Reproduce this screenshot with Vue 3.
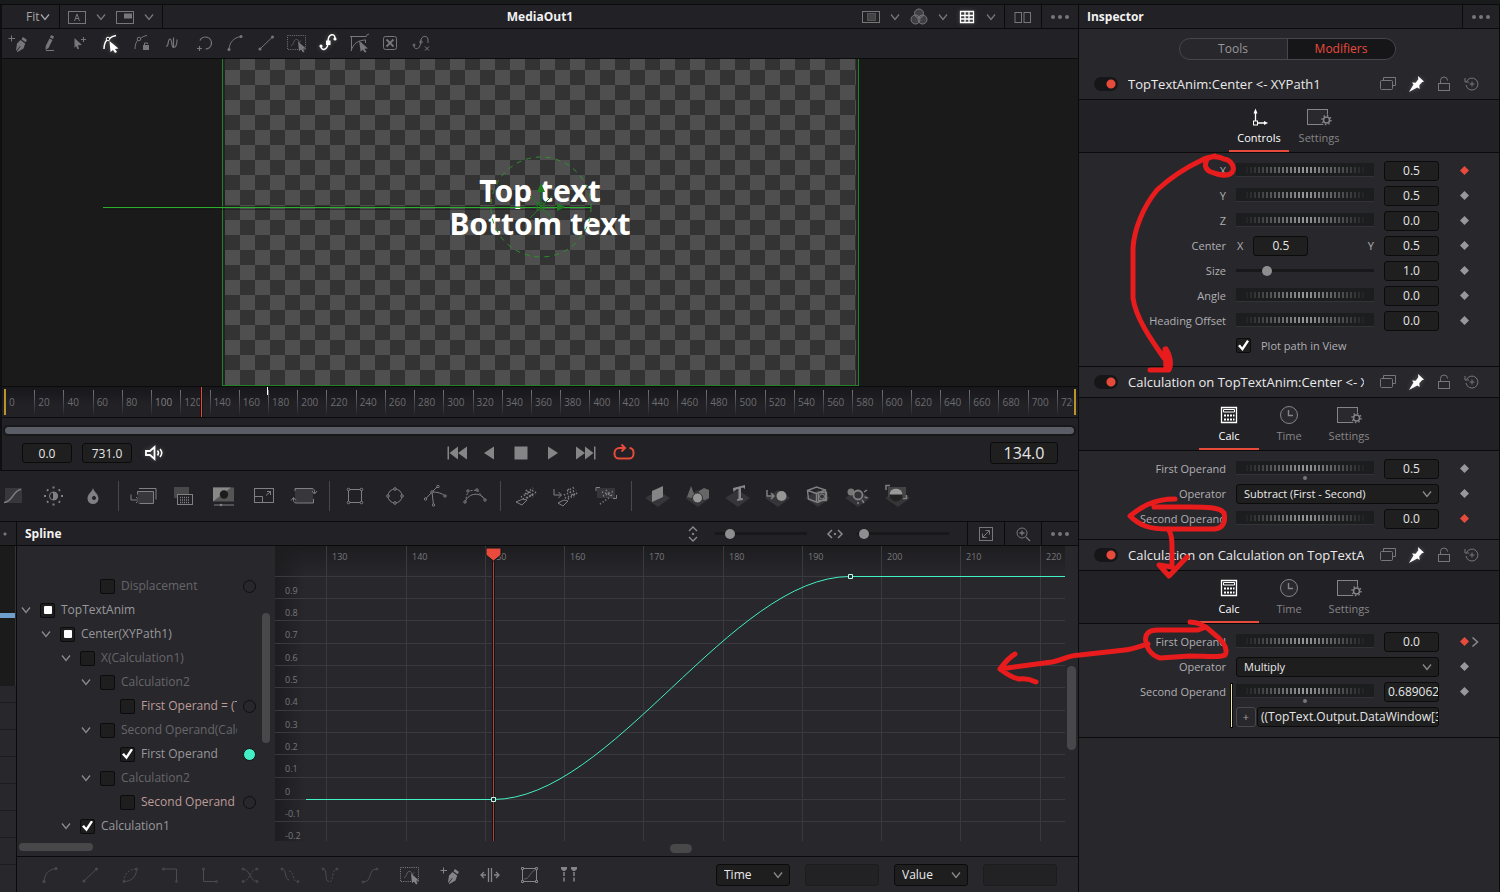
<script setup>
import { h } from 'vue'

const icons = {
  chev: '<path d="M8 9.500l4 5 4-5" stroke-width="1.300"/>',
  chevR: '<path d="M9.500 7.500l5 4.500-5 4.500" stroke-width="1.500"/>',
  boxA: '<rect x="3.500" y="6.500" width="17" height="12"/><path d="M9.500 16l2.500-7 2.500 7M10.500 13.500h3"/>',
  pip: '<rect x="3.500" y="6.500" width="17" height="12"/><rect x="11" y="8.500" width="8" height="5" fill="currentColor" stroke="none"/>',
  roi: '<rect x="3.500" y="6.500" width="17" height="11"/><rect x="8.500" y="8.500" width="8" height="7" stroke-dasharray="1 1" fill="#444"/>',
  rgb: '<g fill="currentColor" fill-opacity=".35"><circle cx="12" cy="8.500" r="4.500"/><circle cx="8.500" cy="14.500" r="4.500"/><circle cx="15.500" cy="14.500" r="4.500"/></g>',
  grid: '<path d="M5.500 6.500h13v11h-13zM5.500 10.500h13M5.500 14h13M10 6.500v11M14 6.500v11" stroke-width="1.300"/>',
  split: '<rect x="4" y="7.500" width="6.500" height="10"/><rect x="13" y="7.500" width="6.500" height="10"/>',
  dots: '<g fill="currentColor" stroke="none"><circle cx="5" cy="12" r="2"/><circle cx="12" cy="12" r="2"/><circle cx="19" cy="12" r="2"/></g>',
  pen: '<path d="M2.500 7.500h6.500M5.500 4.500v6"/><path d="M17 6l4 3-1.500 2.300-4-3zM14.500 9l4.700 3.500-1.700 5-6 3.500-.700-.500 3.700-5-.500-.500-3.700 4.700-.300-.500 1-6.700z" fill="currentColor" stroke="none"/>',
  pencil: '<path d="M14 4l3 1.500-1 2.500-3-1.500zM12.500 7.500l3 1.500-4 8-3 2 .200-4z" fill="currentColor" stroke="none"/><path d="M9 19.500h8"/>',
  addpt: '<path d="M6.500 7l7.500 7-4 .300 1 3.500-1.500.500-1.500-3.300-1.500 2z" fill="currentColor" stroke="none"/><path d="M13 8.500h5M15.500 6v5"/>',
  modify: '<path d="M5 18C5 14 6 11 8 9M10.500 7.500C12 6 14 5 17 4.500" stroke-width="1.500"/><circle cx="9" cy="8" r="1.800"/><path d="M10.500 10l9 7.500-3.500.500 2 3-2 1-2-3-2.500 2z" fill="currentColor" stroke="none"/>',
  modlock: '<path d="M5 18C5 14 6 11 8 9M10.500 7.500C12 6 14 5 17 4.500"/><circle cx="9" cy="8" r="1.800"/><rect x="13" y="14" width="6" height="5" fill="currentColor" stroke="none"/><path d="M14.500 14v-2h3v1"/>',
  wave: '<path d="M5 15c3 1 1.500-7 4-7s1 8.500 3.500 8.500 3.500-3 3.500-8M12.500 6.500v10" stroke-width="1.200"/>',
  loop: '<path d="M8 9.500a6 6 0 1 1 5.500 8.500M5 17.500h5M7.500 15v5" stroke-width="1.200"/>',
  arc: '<path d="M6 18.500C6.500 11 11 6.500 18 5.500"/><g fill="currentColor" stroke="none"><circle cx="6" cy="18.500" r="1.500"/><circle cx="18" cy="5.500" r="1.500"/></g>',
  line: '<path d="M6 18L18.500 6"/><g fill="currentColor" stroke="none"><circle cx="6" cy="18" r="1.500"/><circle cx="18.500" cy="6" r="1.500"/></g>',
  marq: '<rect x="2.500" y="4.500" width="18" height="14" stroke-dasharray="1 1.200"/><path d="M6 14.500c3 0 2-6 5.500-6s1 6 4.500 1" opacity=".6"/><path d="M13 10.500l8 7-3 .300 1.500 3-1.500.700-2-3-2 1.800z" fill="currentColor" stroke="none"/>',
  spline: '<path d="M5 15.500c0 4.500 7 4.500 7-4.500s7-9 7-4" stroke-width="1.500"/><g fill="currentColor" stroke="none"><rect x="10" y="9.500" width="4.500" height="4.500"/><circle cx="5" cy="15" r="1.600"/><circle cx="19" cy="8" r="1.600"/></g>',
  poly: '<path d="M4.500 19.500v-14h15M4 20c2-7 7-11 15-11M3 5.500h2M19 4.500l3-1.500M18.500 9v3"/><path d="M12 9.500l9 8-3.500.300 2 3-1.500 1-2.300-3-2 2z" fill="currentColor" stroke="none"/>',
  closebox: '<rect x="5.500" y="5.500" width="13" height="13" rx="2"/><path d="M8.500 8.500l7 7M15.500 8.500l-7 7" stroke-width="1.800"/>',
  splinex: '<path d="M5 15c0 4 6.500 4 6.500-3.500S18.500 4 19 8v4"/><circle cx="5" cy="14" r="1"/><circle cx="12" cy="11" r="1.200"/><path d="M16 15.500l4 4M20 15.500l-4 4"/>',
  first: '<path d="M2.500 5.500h1.500v13H2.500zM13 5.500v13L4.500 12zM22 5.500v13L13 12z" fill="currentColor" stroke="none"/>',
  back: '<path d="M17 5.500v13L7 12z" fill="currentColor" stroke="none"/>',
  stop: '<path d="M5.500 5.500h13v13h-13z" fill="currentColor" stroke="none"/>',
  play: '<path d="M7 5.500v13L17 12z" fill="currentColor" stroke="none"/>',
  last: '<path d="M20 5.500h1.500v13H20zM11 5.500v13l8.500-6.500zM2 5.500v13L11 12z" fill="currentColor" stroke="none"/>',
  repeat: '<path d="M12.500 7H7.500a5 5 0 0 0-5 5v1a4.500 4.500 0 0 0 4.500 4.500h10a4.500 4.500 0 0 0 4.500-4.500v-1.500a4.500 4.500 0 0 0-4-4.500M9.500 3.500L13 7l-3.500 3.500" stroke-width="2"/>',
  sound: '<path d="M12.500 6v12l-4.500-4H4v-4h4z" stroke-width="1.800"/><path d="M15.500 9.500q2 2.500 0 5M18 8q3.500 4 0 8" stroke-width="1.500"/>',
  curve: '<rect x="4" y="4" width="17" height="15" fill="#38383c" stroke="none"/><path d="M3 18.500C12 18.500 12 5.500 20 5.500" stroke-width="1.500"/>',
  bright: '<circle cx="12.500" cy="12" r="4"/><path d="M12.500 8a4 4 0 0 1 0 8z" fill="currentColor"/><path d="M12.500 2.500v2M12.500 19.500v2M3 12h2M20 12h2M6 5.500l1.300 1.300M17.700 17.200l1.300 1.300M6 18.500l1.300-1.300M17.700 6.800L19 5.500" stroke-width="2"/>',
  drop: '<path d="M12 4c1 4 5.500 6 5.500 10.500a5.500 5.500 0 0 1-11 0C6.500 10 11 8 12 4zM13 12a2 2 0 1 0 .01 0z" fill="currentColor" stroke="none" fill-rule="evenodd"/>',
  loader: '<path d="M7 4.500h17v11M-1 10.500v5.500h8M4 13l3 3-3 3"/><rect x="5.500" y="7.500" width="16" height="12" fill="#38383c" stroke="none"/><path d="M5.500 10.500v-3h16v12h-14"/>',
  merge: '<rect x="2" y="3" width="15" height="11" fill="#48484b" stroke="none"/><rect x="5.500" y="10.500" width="15" height="10" fill="#222125"/><path d="M8 13.500h10M8 16h10M8 18.500h10" stroke-dasharray="1 1" stroke-width="1.500"/>',
  matte: '<rect x="1" y="3.500" width="21" height="14" fill="#555" stroke="none"/><path d="M1 17.500v-14h18z" fill="#888" stroke="none"/><circle cx="12" cy="10.500" r="4.200" fill="#1c1c1f" stroke="none"/><path d="M2 21h20"/><circle cx="9" cy="21" r="1.300" fill="currentColor" stroke="none"/>',
  resize: '<rect x="2.500" y="4.500" width="19" height="14"/><path d="M2.500 12.500h8v6M14 11.500l4.500-4M15 7.500h3.500V11"/>',
  rotate: '<rect x="3" y="5" width="18" height="14" fill="#38383c" stroke="none"/><path d="M3 7v-2.500h17q3 0 2.500 5M20 7l2.500 3L25 7M21.500 15v4H4q-3 0-2.500-5M-1 16.500l2.500-3 2.500 3"/>',
  rect: '<path d="M5.500 5.500h13v13h-13z"/><g fill="#222125"><circle cx="5.500" cy="5.500" r="1.300"/><circle cx="18.500" cy="5.500" r="1.300"/><circle cx="5.500" cy="18.500" r="1.300"/><circle cx="18.500" cy="18.500" r="1.300"/></g>',
  ell: '<circle cx="12" cy="12" r="7"/><g fill="#222125"><circle cx="12" cy="5" r="1.300"/><circle cx="19" cy="12" r="1.300"/><circle cx="5" cy="12" r="1.300"/><circle cx="12" cy="19" r="1.300"/></g>',
  bez: '<path d="M2.500 15L9 8l6-6M9 8l1.500 13M9 8c5 0 10 1 13 4"/><g fill="#222125"><circle cx="2.500" cy="15" r="1.200"/><circle cx="9" cy="8" r="1.200"/><circle cx="15" cy="2.500" r="1.200"/><circle cx="22" cy="12" r="1.200"/><circle cx="10.500" cy="21" r="1.200"/></g>',
  bsp: '<path d="M2 18C6 8 18 8 22 16"/><path d="M2 18L5 7l9-1 8 10" stroke-dasharray="2 1.500"/><g fill="#222125"><circle cx="2" cy="18" r="1.200"/><circle cx="5" cy="7" r="1.200"/><circle cx="14" cy="6" r="1.200"/><circle cx="22" cy="16" r="1.200"/></g>',
  emit: '<path d="M2 18l7-3 4 1-5 5z"/><path d="M7 13l13-7M9 15l12-5M11 10l8-6M13 14l9-6M12 6l7 7" stroke-dasharray="1.200 2" stroke-width="1.800"/>',
  pimport: '<path d="M0 5v6h7M4.500 8l3 3-3 3M4 19l6-3 4 1-5 5z"/><path d="M10 11l12-5M11 14l12-5M13 7l8-4M14 15l9-6M14 5l6 8" stroke-dasharray="1.200 2" stroke-width="1.800"/>',
  pend: '<rect x="3" y="4" width="18" height="10" fill="#36363a" stroke="none"/><path d="M2 7V3.500h4M19 14.500h3.500V11"/><path d="M6 20l10-7M8 8l12 4M9 12l11-5M12 6l6 8" stroke-dasharray="1.200 2" stroke-width="1.600"/>',
  plane: '<path d="M0 14l13-8 12 8-12 9z" fill="#36363a" stroke="none"/><path d="M7 7l11-5v11L7 18z" fill="#858585" stroke="none"/>',
  shape: '<path d="M0 14l13-8 12 8-12 9z" fill="#36363a" stroke="none"/><path d="M6 2l4 10-3 2-5-1zM14 7l5-3 5 2v8l-4 2-6-2z" fill="#666" stroke="none"/><circle cx="12.500" cy="14" r="5" fill="#969696" stroke="#333"/>',
  text3: '<path d="M0 14l13-8 12 8-12 9z" fill="#36363a" stroke="none"/><path d="M8 4l12-3v4l-2-1.500-2 .500v10l2 .500v1.500l-6 1v-1.500l1.500-1V5l-2 .500L8.500 8z" fill="#888" stroke="none"/>',
  import3: '<path d="M0 14l13-8 12 8-12 9z" fill="#36363a" stroke="none"/><path d="M2 6v6h7M6 9l3 3-3 3" stroke-width="1.500"/><circle cx="16.500" cy="12" r="5" fill="#969696" stroke="none"/>',
  camera: '<path d="M0 14l13-8 12 8-12 9z" fill="#36363a" stroke="none"/><path d="M2.500 6.500l9-3.500 9 3v9l-8 3.500-9-3.500zM2.500 6.500l9 3M11.500 9.500v9M11.500 9.500l9-3.500M13.500 8.500h8v8h-8z" stroke-width="1.400"/><circle cx="17" cy="12.500" r="2.500"/>',
  light: '<path d="M0 14l13-8 12 8-12 9z" fill="#36363a" stroke="none"/><circle cx="6" cy="8" r="3.500" fill="#777" stroke="none"/><circle cx="13" cy="11" r="4.500" fill="#333" stroke-width="1.800"/><path d="M19 8l3-2M19.500 13l3 1M17 16l2 3M13 18v2" stroke-width="1.500"/>',
  render: '<path d="M0 14l13-8 12 8-12 9z" fill="#36363a" stroke="none"/><rect x="3" y="3" width="18" height="10" fill="#444" stroke="none"/><path d="M1 6V1.500h4M18 14.500h3.500V11" stroke-width="1.500"/><circle cx="11" cy="11" r="6.500" fill="#222" stroke="none"/><path d="M4.500 10.500a6.500 6 0 0 1 13 0z" fill="#999" stroke="none"/>',
  stack: '<path d="M7.500 8V5.500h12v8H17"/><rect x="4.500" y="8.500" width="12" height="9" rx="1"/>',
  pin: '<path d="M14 4l6 5.500-2 .700-2.700 3 .300 3.800-2.300-1.500L5 20l4.500-7.500L8 10.500l3.700.200 2.600-3.500z" fill="currentColor" stroke="none"/>',
  lock: '<rect x="6.500" y="11.500" width="11" height="7"/><path d="M8.500 11.500V8.500a3 3 0 0 1 7 0"/>',
  reset: '<path d="M6.500 9.500a6 6 0 1 1-.500 3.500M5 6v4h4M12 9.500v5M9.500 12h5"/>',
  axes: '<path d="M8.500 16V6M10.500 18H18" stroke-width="1.300"/><rect x="6.500" y="16" width="4" height="4"/><path d="M6.500 8.500l2-5 2 5zM17 16l4 2-4 2z" fill="currentColor" stroke="none"/>',
  settings: '<rect x="0.500" y="4.500" width="20" height="15" fill="#2a292e"/><circle cx="19.500" cy="15" r="5.500" fill="#222125" stroke="none"/><circle cx="19.500" cy="15" r="3" stroke-width="1.500"/><circle cx="19.500" cy="15" r="4.500" stroke-dasharray="1.500 2" stroke-width="1.500"/>',
  calc: '<path d="M4.500 4.500h15v15h-15z" stroke-width="1.300"/><path d="M6.500 6.500h11v2.500h-11z"/><path d="M7 12.500h10.500M7 16.500h10.500" stroke-width="2" stroke-dasharray="2 1"/>',
  clock: '<circle cx="12" cy="12" r="8.500" fill="#2a292e"/><path d="M11.500 7v5.500H16" stroke-width="1.400"/>',
  vert: '<path d="M7 9l4-4 4 4M7 15l4 4 4-4" stroke-width="1.300"/><circle cx="11" cy="12" r=".800" fill="currentColor"/>',
  horiz: '<path d="M8 8l-4 4 4 4M14 8l4 4-4 4" stroke-width="1.500"/><circle cx="11" cy="12" r=".800" fill="currentColor"/>',
  fit: '<rect x="5.500" y="5.500" width="13" height="13"/><path d="M9 15l6-6M11.500 8.500h4v4M8.500 11.500v4h4"/>',
  zoom: '<circle cx="11" cy="11" r="5"/><path d="M15 15l4 4M8.500 11h5M11 8.500v5" stroke-width="1.300"/>',
  step1: '<path d="M5.500 6h13v12.500"/><circle cx="5.500" cy="6" r="1"/><circle cx="18.500" cy="18.500" r="1"/>',
  step2: '<path d="M5.500 6v12.500h13"/><circle cx="5.500" cy="6" r="1"/><circle cx="18.500" cy="18.500" r="1"/>',
  leaf: '<path d="M6 18.500C14 18.500 18.500 13 18.500 6"/><path d="M6 18.500C6 11 11 6 18.500 6" stroke-dasharray="2 1.500"/><circle cx="6" cy="18.500" r="1"/><circle cx="18.500" cy="6" r="1"/>',
  cross: '<path d="M5 6c7 0 7 12.500 14 12.500"/><path d="M5 18.500C12 18.500 12 6 19 6" stroke-dasharray="2 1.500"/><circle cx="5" cy="6" r="1"/><circle cx="5" cy="18.500" r="1"/><circle cx="19" cy="6" r="1"/><circle cx="19" cy="18.500" r="1"/>',
  shift: '<path d="M4 6c5 0 2 10 7 11"/><path d="M11 8c5 0 3 11 9 11" stroke-dasharray="2 1.500"/><circle cx="4" cy="6" r="1"/><circle cx="20" cy="18.500" r="1"/>',
  dip: '<path d="M5 6c5 0 1 12.500 6 12.500"/><path d="M12 18.500C16 18.500 13 6 19 6" stroke-dasharray="2 1.500"/><circle cx="5" cy="6" r="1"/><circle cx="19" cy="6" r="1"/>',
  ess: '<path d="M5 19c10 0 4-13 14-13"/><circle cx="5" cy="19" r="1"/><circle cx="19" cy="6" r="1"/>',
  stretch: '<path d="M10.500 5v14M13.500 5v14M8 12H3M6 9l-3 3 3 3M16 12h5M18 9l3 3-3 3" stroke-width="1.300"/>',
  shapebox: '<path d="M4.500 5.500h14v13h-14z"/><path d="M6 16c6 0 5-6 11-9" opacity=".6"/><g fill="#28272c"><path d="M3.500 4.500h2v2h-2zM17.500 4.500h2v2h-2zM3.500 17.500h2v2h-2zM17.500 17.500h2v2h-2z"/></g>',
  markers: '<path d="M3 4h6v2l-2 2H5L3 6zM13 4h6v2l-2 2h-2l-2-2z" fill="currentColor" stroke="none"/><path d="M6 9v11M16 9v11" stroke-dasharray="4 1.500" stroke-width="1.500"/>',
}

const Icon = ({ name }) =>
  h('svg', {
    width: 24, height: 24, viewBox: '0 0 24 24', fill: 'none', stroke: 'currentColor',
    overflow: 'visible', 'aria-hidden': 'true', innerHTML: icons[name],
  })
Icon.props = ['name']

const drawTools = ['pen', 'pencil', 'addpt', 'modify', 'modlock', 'wave', 'loop', 'arc', 'line', 'marq', 'spline', 'poly', 'closebox', 'splinex']
const brightTools = ['modify', 'spline']
const toolGroups = [
  ['curve', 'bright', 'drop'],
  ['loader', 'merge', 'matte', 'resize', 'rotate'],
  ['rect', 'ell', 'bez', 'bsp'],
  ['emit', 'pimport', 'pend'],
  ['plane', 'shape', 'text3', 'import3', 'camera', 'light', 'render'],
]
const splineTools = ['arc', 'line', 'leaf', 'step1', 'step2', 'cross', 'shift', 'dip', 'ess', 'marq', 'pen', 'stretch', 'shapebox', 'markers']
const frames = Array.from({ length: 37 }, (_, i) => i * 20)

const tree = [
  { d: 3, t: 'Displacement', dim: 1, dot: 'o' },
  { d: 0, t: 'TopTextAnim', open: 1, s: 'mixed' },
  { d: 1, t: 'Center(XYPath1)', open: 1, s: 'mixed' },
  { d: 2, t: 'X(Calculation1)', open: 1, dim: 1 },
  { d: 3, t: 'Calculation2', open: 1, dim: 1 },
  { d: 4, t: 'First Operand = (T', pink: 1, dot: 'o' },
  { d: 3, t: 'Second Operand(Calc', open: 1, dim: 1 },
  { d: 4, t: 'First Operand', s: 'on', dot: 'full' },
  { d: 3, t: 'Calculation2', open: 1, dim: 1 },
  { d: 4, t: 'Second Operand', pink: 1, dot: 'o' },
  { d: 2, t: 'Calculation1', open: 1, s: 'on' },
]

const vLines = [51, 131, 210, 289, 368, 448, 527, 606, 685, 765].map((x, i) => ({ x, t: 130 + i * 10 }))
const hLines = [30, 52, 74, 97, 119, 141, 164, 186, 208, 231, 253, 275].map((y, i) => ({
  y, t: ['0.9', '0.8', '0.7', '0.6', '0.5', '0.4', '0.3', '0.2', '0.1', '0', '-0.1', '-0.2'][i],
}))

const calcTabs = [['calc', 'Calc'], ['clock', 'Time'], ['settings', 'Settings']]
const sections = [
  {
    title: 'TopTextAnim:Center <- XYPath1',
    tabs: [['axes', 'Controls'], ['settings', 'Settings']],
    rows: [
      { k: 'wheel', l: 'X', v: '0.5', key: 1 },
      { k: 'wheel', l: 'Y', v: '0.5' },
      { k: 'wheel', l: 'Z', v: '0.0' },
      { k: 'point', l: 'Center', v: '0.5' },
      { k: 'slider', l: 'Size', v: '1.0' },
      { k: 'wheel', l: 'Angle', v: '0.0' },
      { k: 'wheel', l: 'Heading Offset', v: '0.0' },
      { k: 'check', l: 'Plot path in View' },
    ],
  },
  {
    title: 'Calculation on TopTextAnim:Center <- X',
    tabs: calcTabs,
    rows: [
      { k: 'wheel', l: 'First Operand', v: '0.5', mark: 1 },
      { k: 'select', l: 'Operator', v: 'Subtract (First - Second)' },
      { k: 'wheel', l: 'Second Operand', v: '0.0', key: 1 },
    ],
  },
  {
    title: 'Calculation on Calculation on TopTextA',
    tabs: calcTabs,
    rows: [
      { k: 'wheel', l: 'First Operand', v: '0.0', key: 1, next: 1 },
      { k: 'select', l: 'Operator', v: 'Multiply' },
      { k: 'wheel', l: 'Second Operand', v: '0.689062', mark: 1, long: 1, expr: 1 },
      { k: 'expr', l: '', v: '((TopText.Output.DataWindow[3' },
    ],
  },
]
</script>

<template>
  <div class="app">
    <div class="strip"></div>
    <div class="main">
      <div class="left">
        <section class="viewer">
          <header class="bar">
            <div class="lead">
              <div class="cell fit"><button class="fitbtn">Fit<Icon name="chev" /></button></div>
              <div class="cell views">
                <button aria-label="Buffer"><Icon name="boxA" /></button><button aria-label="Buffer menu"><Icon name="chev" /></button>
                <button aria-label="Sub view"><Icon name="pip" /></button><button aria-label="Sub view menu"><Icon name="chev" /></button>
              </div>
            </div>
            <h1 class="title">MediaOut1</h1>
            <div class="trail">
              <div class="cell opts">
                <button aria-label="Region"><Icon name="roi" /></button><button aria-label="Region menu"><Icon name="chev" /></button>
                <button aria-label="Channels"><Icon name="rgb" /></button><button aria-label="Channels menu"><Icon name="chev" /></button>
                <button class="on" aria-label="Grid"><Icon name="grid" /></button><button aria-label="Grid menu"><Icon name="chev" /></button>
              </div>
              <button class="endcell" aria-label="Split view"><Icon name="split" /></button>
              <button class="endcell" aria-label="Viewer options"><Icon name="dots" /></button>
            </div>
          </header>
          <div class="tools">
            <button v-for="t in drawTools" :key="t" :class="{ on: brightTools.includes(t) }" :aria-label="t"><Icon :name="t" /></button>
          </div>
          <div class="canvas">
            <div class="frame"><p class="words">Top text<br>Bottom text</p></div>
            <svg class="gizmo" width="876" height="110" viewBox="0 0 876 110" fill="none" aria-hidden="true">
              <path d="M0 57.500H488M0 54.500H488" stroke="#141414" opacity=".5" />
              <path d="M0 55.500H488" stroke="#2ab02a" />
              <circle cx="438" cy="55" r="50" stroke="#2a942a" stroke-dasharray="5 5" />
              <path d="M438 55V33M427 44l22 22M449 44l-22 22M434 51h7v7h-7z" stroke="#1f7a22" />
              <path d="M434 40l4-9 4 9zM454 51l8 4-8 4z" fill="#1f7a22" />
            </svg>
          </div>
          <div class="ruler">
            <div class="ticks"><span v-for="f in frames" :key="f" :class="{ strong: f === 100, zero: f === 0 }">{{ f }}</span></div>
            <i class="edge in"></i><i class="edge out"></i><i class="play"></i><i class="mark"></i>
          </div>
          <div class="range"><div></div></div>
          <div class="transport">
            <div class="side">
              <input class="num" value="0.0" aria-label="Start frame"><input class="num" value="731.0" aria-label="End frame">
              <button class="on" aria-label="Mute"><Icon name="sound" /></button>
            </div>
            <div class="center">
              <button aria-label="First frame"><Icon name="first" /></button><button aria-label="Play reverse"><Icon name="back" /></button>
              <button aria-label="Stop"><Icon name="stop" /></button><button aria-label="Play"><Icon name="play" /></button>
              <button aria-label="Last frame"><Icon name="last" /></button><button class="red" aria-label="Loop"><Icon name="repeat" /></button>
            </div>
            <div class="side end"><input class="num big" value="134.0" aria-label="Current frame"></div>
          </div>
        </section>
        <div class="toolbox">
          <template v-for="(g, i) in toolGroups" :key="i">
            <i v-if="i" class="sep"></i>
            <button v-for="t in g" :key="t" :aria-label="t"><Icon :name="t" /></button>
          </template>
        </div>
        <div class="lower">
          <div class="sliver"><div class="sdot"></div><div class="sdark"></div><div class="srows"></div></div>
          <section class="spline">
            <header class="bar">
              <h2>Spline</h2>
              <div class="zooms">
                <Icon name="vert" /><input class="slider v" type="range" min="0" max="100" value="12" aria-label="Vertical zoom">
                <Icon name="horiz" /><input class="slider v" type="range" min="0" max="100" value="3" aria-label="Horizontal zoom">
              </div>
              <button class="endcell" aria-label="Fit"><Icon name="fit" /></button>
              <button class="endcell" aria-label="Zoom"><Icon name="zoom" /></button>
              <button class="endcell" aria-label="Spline options"><Icon name="dots" /></button>
            </header>
            <div class="work">
              <div class="tree">
                <div class="list">
                  <div v-for="(n, i) in tree" :key="i" class="node" :class="'d' + n.d">
                    <Icon v-if="n.open" name="chev" class="nchev" /><i v-else class="nchev"></i>
                    <label :class="{ dim: n.dim, pink: n.pink }">
                      <input type="checkbox" class="cb" :class="{ mixed: n.s === 'mixed' }" :checked="n.s === 'on'"><span>{{ n.t }}</span>
                    </label>
                    <i v-if="n.dot" class="ring" :class="n.dot"></i>
                  </div>
                </div>
                <i class="vbar"></i><i class="hbar"></i>
              </div>
              <div class="graph">
                <svg class="plot" viewBox="0 0 790 295" preserveAspectRatio="none" role="img" aria-label="Spline curve">
                  <defs>
                    <linearGradient id="gt" x2="0" y2="1"><stop stop-color="#1d1d20" /><stop offset="1" stop-color="#1d1d20" stop-opacity="0" /></linearGradient>
                    <linearGradient id="gl"><stop stop-color="#1d1d20" /><stop offset="1" stop-color="#1d1d20" stop-opacity="0" /></linearGradient>
                  </defs>
                  <rect width="790" height="30" fill="url(#gt)" /><rect width="30" height="295" fill="url(#gl)" />
                  <g stroke="#3a393e">
                    <path v-for="v in vLines" :key="v.x" :d="`M${v.x}.5 0V295`" />
                    <path v-for="l in hLines" :key="l.y" :d="`M0 ${l.y}.5H790`" />
                  </g>
                  <g fill="#77777a" font-size="9">
                    <text v-for="v in vLines" :key="v.x" :x="v.x + 6" y="14">{{ v.t }}</text>
                    <text v-for="l in hLines" :key="l.y" x="10" :y="l.y + 18">{{ l.t }}</text>
                  </g>
                  <path d="M31 253.500H218C337 253.500 456 30.500 575 30.500H790" fill="none" stroke="#43efc4" />
                  <path d="M218.500 8V295" stroke="#141416" stroke-width="3" /><path d="M218.500 8V295" stroke="#a8463c" />
                  <path d="M211 2h15v7l-7.500 6-7.500-6z" fill="#e84b3c" stroke="#141416" />
                  <path d="M216.500 251.500h4v4h-4zM573.500 28.500h4v4h-4z" fill="#28272c" stroke="#b8fff0" />
                </svg>
                <i class="gbar"></i>
              </div>
              <div class="gscroll"><i></i></div>
            </div>
            <footer class="foot">
              <button v-for="(t, i) in splineTools" :key="t" :class="{ faint: i < 9 }" :aria-label="t"><Icon :name="t" /></button>
              <div class="fields">
                <span class="sel"><select aria-label="Time mode"><option>Time</option></select><Icon name="chev" /></span>
                <input class="blank" aria-label="Time value">
                <span class="sel"><select aria-label="Value mode"><option>Value</option></select><Icon name="chev" /></span>
                <input class="blank" aria-label="Key value">
              </div>
            </footer>
          </section>
        </div>
      </div>

      <aside class="inspector">
        <header class="bar"><h2>Inspector</h2><button class="endcell" aria-label="Inspector options"><Icon name="dots" /></button></header>
        <div class="switch"><div class="pill"><button>Tools</button><button class="active">Modifiers</button></div></div>
        <section v-for="(s, si) in sections" :key="si" class="sec">
          <div class="shead">
            <label class="toggle"><input type="checkbox" checked :aria-label="s.title"></label>
            <h3>{{ s.title }}</h3>
            <button aria-label="Versions"><Icon name="stack" /></button><button class="on" aria-label="Pin"><Icon name="pin" /></button>
            <button aria-label="Lock"><Icon name="lock" /></button><button aria-label="Reset"><Icon name="reset" /></button>
          </div>
          <div class="tabs">
            <button v-for="(t, i) in s.tabs" :key="t[1]" :class="{ active: i === 0 }"><Icon :name="t[0]" /><span>{{ t[1] }}</span></button>
          </div>
          <div class="rows">
            <div v-for="(r, i) in s.rows" :key="i" class="row">
              <template v-if="r.k === 'check'">
                <span></span><label class="plot-check"><input type="checkbox" class="cb" checked>{{ r.l }}</label>
              </template>
              <template v-else-if="r.k === 'expr'">
                <span></span>
                <div class="expr"><button aria-label="Pick">+</button><input :value="r.v" aria-label="Expression"></div>
              </template>
              <template v-else>
                <label :for="`f${si}-${i}`">{{ r.l }}</label>
                <div v-if="r.k === 'select'" class="sel wide"><select :id="`f${si}-${i}`"><option>{{ r.v }}</option></select><Icon name="chev" /></div>
                <template v-else>
                  <div class="ctl">
                    <input v-if="r.k === 'wheel'" class="wheel" type="range" :aria-label="r.l + ' wheel'">
                    <input v-if="r.k === 'slider'" class="slider" type="range" min="0" max="100" value="20" :aria-label="r.l + ' slider'">
                    <div v-if="r.k === 'point'" class="point"><label for="cx">X</label><input id="cx" class="num" value="0.5"><span>Y</span></div>
                    <i v-if="r.mark" class="default"></i>
                    <i v-if="r.expr" class="yellow"></i>
                  </div>
                  <input :id="`f${si}-${i}`" class="num" :class="{ long: r.long }" :value="r.v">
                </template>
                <div class="keys"><button class="key" :class="{ set: r.key }" :aria-label="'Keyframe ' + r.l"></button><Icon v-if="r.next" name="chevR" /></div>
              </template>
            </div>
          </div>
        </section>
      </aside>
    </div>
    <svg class="notes" width="520" height="560" viewBox="980 140 520 560" fill="none" stroke="#e81c1c" stroke-width="5" stroke-linecap="round" stroke-linejoin="round" aria-hidden="true">
      <path d="M1215 156L1208 158C1203 165 1206 170 1211 172 1217 174 1224 177 1230 174 1237 170 1232 160 1224 159 1218 156 1208 156 1202 160 1185 168 1170 178 1157 190 1143 207 1134 230 1133 248V298C1136 320 1155 345 1164 358M1165 349L1166 368M1166 349C1170 355 1172 364 1169 370L1150 370" />
      <path d="M1175 499C1152 499 1140 508 1130 516 1140 526 1150 529 1168 529L1215 529C1223 528 1226 522 1224 513 1220 507 1205 507 1190 507H1154M1168 529C1173 535 1172 545 1172 567L1159 565 1169 576 1187 557" />
      <path d="M1190 622C1200 622 1207 627 1213 633 1222 640 1229 648 1225 655 1220 658 1205 656 1190 656L1160 658C1150 655 1144 645 1146 636 1148 631 1152 630 1160 630H1198L1206 627M1148 644C1143 645 1135 649 1125 650L1080 655C1068 655 1064 660 1052 662L1000 669M1015 654C1008 658 1003 665 1000 669 1008 675 1015 679 1020 679 1027 678 1032 680 1036 682" />
    </svg>
  </div>
</template>

<style>
body { margin: 0; background: #28272c; }
</style>

<style scoped>
* { box-sizing: border-box; }
.app { position: relative; display: flex; flex-direction: column; min-height: 100vh; overflow: hidden; background: #222125; color: #a5a5a8; font: 11px/16px "Open Sans", "Noto Sans", sans-serif; }
button { display: flex; align-items: center; justify-content: center; padding: 0; border: 0; background: none; color: #77777a; font: inherit; }
input, select { font: inherit; margin: 0; }
svg { flex: none; display: block; }
h1, h2, h3, p { margin: 0; }
.on { color: #fff; }
.strip { height: 5px; background: #191a1c; border-bottom: 1px solid #0b0b0c; }
.main { flex: 1; display: flex; }
.left { flex: 1; min-width: 0; display: flex; flex-direction: column; }
.viewer { flex: 1; display: flex; flex-direction: column; border-left: 2px solid #0f0f11; border-right: 1px solid #0b0b0c; }
.bar { display: flex; height: 24px; border-bottom: 1px solid #0b0b0c; background: #222125; }
.bar h2 { flex: 1; font-size: 12px; line-height: 23px; font-weight: 700; color: #f2f2f2; padding-left: 8px; }
.lead, .trail { flex: 1; display: flex; }
.trail { justify-content: flex-end; }
.cell { display: flex; align-items: center; }
.fit { width: 58px; padding-left: 24px; border-right: 1px solid #0b0b0c; }
.fitbtn { font-size: 12px; color: #a5a5a8; }
.fitbtn svg { margin-left: -7px; }
.views { width: 103px; padding-left: 5px; border-right: 1px solid #0b0b0c; }
.title { text-align: center; font-size: 12px; line-height: 23px; color: #f2f2f2; }
.opts { padding-right: 1px; }
.endcell { width: 37px; border-left: 1px solid #0b0b0c; }
.tools { display: flex; height: 30px; padding-bottom: 2px; border-bottom: 1px solid #0b0b0c; }
.tools button { width: 31px; }
.on svg { filter: drop-shadow(0 0 2px #8888); }
.canvas { position: relative; flex: 1; display: flex; justify-content: center; background: #1a1a1a; overflow: hidden; }
.frame { width: 637px; display: flex; justify-content: center; border: 1px solid #228026; border-top: 0; background: repeating-conic-gradient(#4f4f4f 0 25%, #333 0 50%) 2px -4px / 30px 30px; box-shadow: inset 2px 0 #222, inset -2px 0 #222; }
.words { padding-top: 115px; text-align: center; font-family: "Noto Sans", "Open Sans", sans-serif; font-size: 30px; line-height: 33px; font-weight: 700; color: #fff; }
.gizmo { position: absolute; left: 50%; top: 93px; margin-left: -437px; }
.ruler { position: relative; height: 32px; padding-left: 3px; padding-right: 5px; border: solid #0b0b0c; border-width: 1px 0; background: linear-gradient(#17181b, #222126 60%); overflow: hidden; }
.ticks { display: flex; height: 30px; padding-top: 3px; overflow: hidden; }
.ticks span { flex: 0 0 2.736%; height: 25px; padding-left: 3px; line-height: 25px; font-size: 10px; color: #6c6c6e; border-left: 1px solid; border-image: linear-gradient(#77777a, #222126) 1; }
.ticks .zero { border-image: none; border-color: transparent; }
.ticks .strong { color: #808083; }
.ruler i { position: absolute; }
.edge { top: 2px; bottom: 2px; width: 2px; background: #b8942a; }
.in { left: 2px; }
.out { right: 2px; }
.play { left: 18.4%; top: 0; bottom: 0; width: 3px; background: #e84b3c; border: solid #141416; border-width: 0 1px; }
.mark { left: 24.6%; top: 0; width: 1px; height: 8px; background: #fff; }
.range { padding: 7px 2px 0 1px; }
.range div { height: 11px; border: 2px solid #17181a; border-radius: 6px; background: #5a5d66; }
.transport { display: flex; align-items: center; height: 35px; border-bottom: 1px solid #0b0b0c; }
.side { flex: 1; display: flex; align-items: center; gap: 10px; padding-left: 20px; }
.side.end { justify-content: flex-end; padding-left: 0; padding-right: 20px; }
.num { width: 55px; height: 20px; padding: 0; border: 1px solid #0b0b0c; border-radius: 3px; background: #1f1f20; color: #e6e6e6; font-size: 12px; text-align: center; outline: 0; }
.side .num { width: 50px; }
.side .big { width: 68px; height: 22px; font-size: 16px; }
.center { display: flex; gap: 8px; }
.center button { color: #858588; }
.center button:last-child { margin-left: 6px; }
.center button:nth-child(5) { margin-left: 1px; }
.center .red { color: #e84b3c; }
.toolbox { display: flex; align-items: center; height: 51px; border-bottom: 1px solid #0b0b0c; border-right: 1px solid #0b0b0c; overflow: hidden; }
.toolbox button { flex: none; width: 40px; color: #808083; }
.toolbox button:first-child { margin-left: -7px; }
.sep { flex: none; width: 1px; height: 30px; margin: 0 5px; background: #48484c; }
.lower { display: flex; }
.sliver { display: flex; flex-direction: column; width: 17px; border-right: 1px solid #0b0b0c; background: #28272c; }
.sdot { height: 24px; border-bottom: 1px solid #0b0b0c; background: radial-gradient(circle at 5px 12px, #77777a 1px, #222125 2px); }
.sdark { height: 140px; background: linear-gradient(#1b1b1c 67px, #6fa0cc 67px 72px, #1b1b1c 72px); border-right: 1px solid #333; }
.srows { flex: 1; background: repeating-linear-gradient(#28272c 0 26px, #1c1c1f 26px 27px); background-position-y: -10px; }
.spline { flex: 1; min-width: 0; background: #28272c; border-right: 1px solid #0b0b0c; }
.zooms { display: flex; align-items: center; gap: 9px; color: #8c8c8f; padding-right: 18px; }
.zooms svg:nth-of-type(2) { margin-left: 8px; }
.slider { appearance: none; width: 138px; height: 14px; background: linear-gradient(#18181a, #18181a) center / 100% 3px no-repeat; }
.slider.v { width: 92px; }
.slider::-webkit-slider-thumb { appearance: none; width: 10px; height: 10px; border-radius: 50%; background: #8e8e90; }
.work { display: flex; height: 310px; }
.tree { position: relative; width: 258px; padding-top: 28px; }
.list { width: 240px; }
.node { display: flex; align-items: center; height: 24px; font-size: 12px; }
.d1 { padding-left: 20px; } .d2 { padding-left: 40px; } .d3 { padding-left: 60px; } .d4 { padding-left: 80px; }
.nchev { flex: none; width: 24px; height: 24px; margin: 0 2px 0 -3px; color: #8c8c8f; }
.node label { flex: 1; min-width: 0; display: flex; align-items: center; gap: 6px; margin-right: 20px; color: #98989b; white-space: nowrap; overflow: hidden; }
.node .dim { color: #666669; }
.node .pink { color: #bc9c98; }
.cb { appearance: none; flex: none; display: grid; place-items: center; width: 15px; height: 15px; border: 1px solid #0b0b0c; border-radius: 2px; background: #1e1e1f; }
.mixed::before { content: ""; width: 8px; height: 8px; border-radius: 1px; background: #fff; }
.cb:checked::before { content: ""; width: 11px; height: 11px; background: #fff; clip-path: polygon(0 55%, 18% 42%, 38% 66%, 82% 0, 100% 12%, 42% 100%); }
.ring { flex: none; width: 13px; height: 13px; margin-left: -14px; margin-right: 1px; border: 1px solid #0e0e10; border-radius: 50%; }
.full { background: #43efc4; }
.vbar, .hbar, .gbar, .gscroll i { position: absolute; border-radius: 5px; background: #48484b; }
.vbar { right: 5px; top: 67px; width: 8px; height: 130px; }
.hbar { left: 2px; bottom: 5px; width: 74px; height: 8px; }
.graph { position: relative; flex: 1; min-width: 0; }
.plot { width: 100%; height: 295px; }
.gbar { left: 50%; bottom: 3px; width: 22px; height: 9px; }
.gscroll { position: relative; width: 13px; }
.gscroll i { left: 2px; top: 120px; width: 9px; height: 84px; }
.foot { display: flex; align-items: center; height: 36px; padding-left: 13px; border-top: 1px solid #0b0b0c; }
.foot > button { flex: none; width: 40px; color: #858588; }
.foot .faint { color: #4c4c50; }
.fields { flex: 1; display: flex; justify-content: flex-end; gap: 15px; padding-right: 21px; }
.sel { position: relative; display: block; width: 74px; }
.sel select { appearance: none; display: block; width: 100%; height: 22px; padding: 0 7px; border: 1px solid #0b0b0c; border-radius: 3px; background: #1e1e1f; color: #eaeaea; font-size: 12px; outline: 0; }
.sel svg { position: absolute; right: 0; top: -1px; color: #8c8c8f; pointer-events: none; }
.blank { width: 74px; height: 22px; border: 1px solid #1c1c1e; border-radius: 3px; background: #222124; }
.inspector { width: 421px; background: #28272c; border-right: 1px solid #0b0b0c; }
.switch { padding: 9px 4px 9px 0; }
.pill { display: flex; width: 217px; height: 22px; margin: 0 auto; border: 1px solid #46464c; border-radius: 11px; overflow: hidden; }
.pill button { flex: 1; font-size: 12px; color: #98989b; }
.pill .active { background: #161618; color: #e84b3c; border-left: 1px solid #46464c; }
.sec { border-bottom: 1px solid #0b0b0c; }
.shead { display: flex; align-items: center; height: 31px; padding: 0 15px; border-bottom: 1px solid #0b0b0c; }
.shead h3 { flex: 1; min-width: 0; margin-left: 10px; margin-right: 10px; font-size: 13px; font-weight: 400; color: #eaeaea; white-space: nowrap; overflow: hidden; }
.shead button { flex: none; width: 28px; }
.shead button:last-child { margin-right: -2px; }
.toggle input { appearance: none; display: block; width: 24px; height: 14px; border-radius: 7px; margin: 0; background: radial-gradient(circle at 17px 7px, #e84b3c 4px, #161618 5px); }
.tabs { display: flex; justify-content: center; height: 53px; border-bottom: 1px solid #0b0b0c; background: #222125; }
.tabs button { flex-direction: column; justify-content: flex-start; width: 60px; padding-top: 5px; color: #858588; border-bottom: 2px solid transparent; }
.tabs span { line-height: 18px; }
.tabs .active { color: #fff; border-color: #e84b3c; }
.rows { padding: 5px 0 8px; }
.row { display: grid; grid-template-columns: 1fr 138px 55px 50px; column-gap: 10px; align-items: center; height: 25px; color: #b0b0b3; }
.row > label:first-child { text-align: right; }
.ctl { position: relative; display: flex; align-items: center; height: 25px; }
.wheel { appearance: none; width: 138px; height: 14px; margin-bottom: 2px; border-bottom: 1px solid #333237; background: linear-gradient(90deg, #1c1d1f 5%, transparent 50%, #1c1d1f 95%), linear-gradient(#1c1d1f 4px, transparent 4px 10px, #1c1d1f 10px), repeating-linear-gradient(90deg, #1c1d1f 0 2px, #98989a 2px 4px); }
.wheel::-webkit-slider-thumb { appearance: none; width: 1px; height: 1px; opacity: 0; }
.point { flex: 1; display: flex; align-items: center; gap: 10px; padding-left: 1px; }
.point span { margin-left: auto; }
.default { position: absolute; left: 67px; bottom: 1px; width: 4px; height: 4px; border-radius: 50%; background: #77777a; }
.yellow { position: absolute; left: -6px; top: 4px; width: 3px; height: 45px; background: #f0e6a0; border: 1px solid #0b0b0c; }
.long { padding-left: 3px; text-align: left; }
.wide { grid-column: 2 / 4; width: auto; }
.wide select { height: 20px; font-size: 11px; }
.wide svg { top: -2px; }
.keys { display: flex; align-items: center; padding-left: 11px; }
.key { width: 9px; height: 9px; background: #98989b; clip-path: polygon(50% 0, 100% 50%, 50% 100%, 0 50%); }
.key.set { background: #e84b3c; }
.keys svg { margin: 0 -12px 0 -6px; color: #8c8c8f; }
.plot-check { grid-column: 2 / 4; display: flex; align-items: center; gap: 10px; }
.expr { grid-column: 2 / 4; display: flex; gap: 1px; }
.expr button { width: 20px; height: 20px; border: 1px solid #48484c; border-radius: 3px; color: #a5a5a8; }
.expr input { flex: 1; min-width: 0; height: 20px; padding: 0 0 0 3px; border: 1px solid #0b0b0c; border-radius: 3px; background: #1f1f20; color: #e6e6e6; font-size: 12px; outline: 0; }
.notes { position: absolute; right: 0; top: 140px; pointer-events: none; }
</style>
